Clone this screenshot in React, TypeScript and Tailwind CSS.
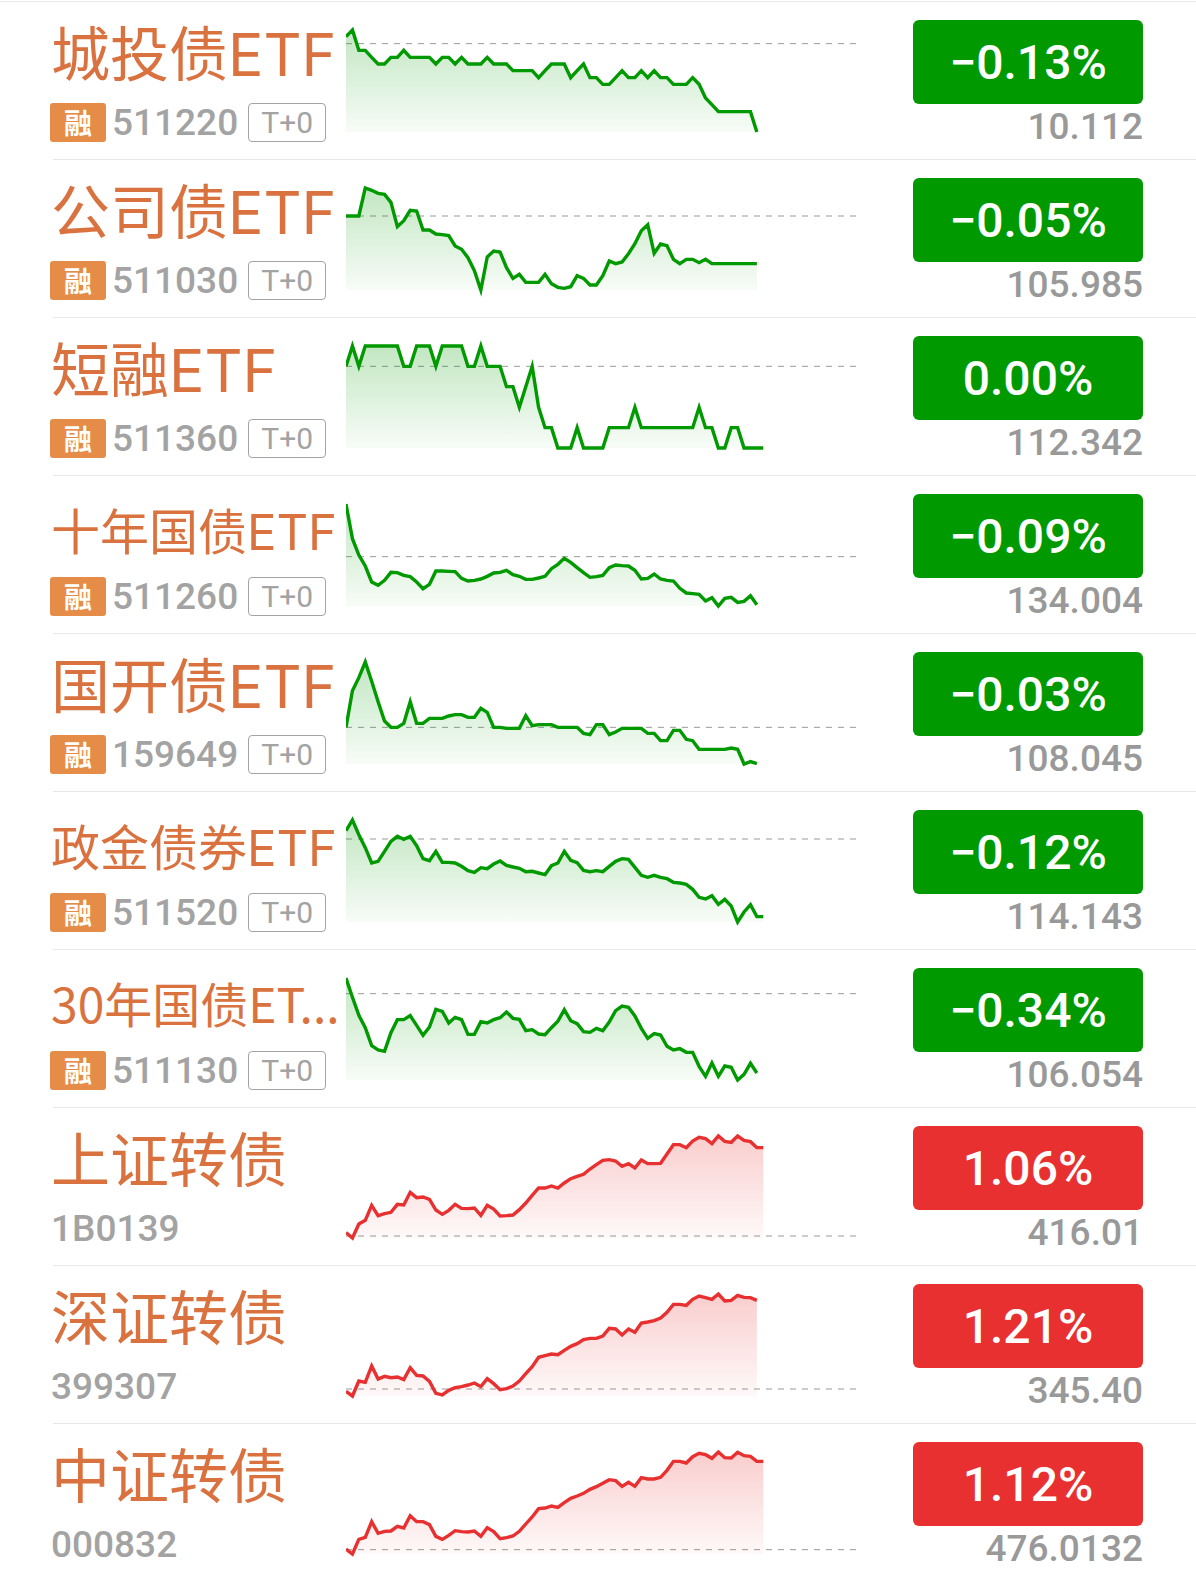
import React from 'react';
import clsx from 'clsx';

type Quote = {
  name: string;
  code: string;
  change: string;
  price: string;
  bond?: boolean;
  up?: boolean;
  base: number;
  points: number[];
};

// points run top-down, 0 is the high of the day and 306 the low
const quotes: Quote[] = [
  {
    name: '城投债ETF',
    code: '511220',
    change: '−0.13%',
    price: '10.112',
    bond: true,
    base: 41,
    points: [20, 0, 61, 61, 82, 102, 102, 82, 82, 61, 82, 82, 82, 82, 102, 82, 82, 102, 82, 102, 102, 102, 82, 102, 102, 102, 122, 122, 122, 122, 143, 122, 102, 102, 102, 143, 122, 102, 143, 143, 163, 163, 143, 122, 143, 143, 122, 143, 122, 143, 143, 163, 163, 163, 143, 163, 204, 224, 245, 245, 245, 245, 245, 245, 306],
  },
  {
    name: '公司债ETF',
    code: '511030',
    change: '−0.05%',
    price: '105.985',
    bond: true,
    base: 84,
    points: [84, 84, 84, 0, 7, 16, 19, 43, 116, 98, 67, 69, 126, 126, 138, 140, 143, 174, 184, 209, 248, 306, 207, 189, 192, 239, 271, 259, 283, 283, 283, 259, 287, 298, 301, 296, 263, 271, 291, 291, 263, 219, 227, 222, 197, 167, 128, 110, 196, 168, 173, 214, 227, 214, 214, 224, 214, 227, 227, 227, 227, 227, 227, 227, 227],
  },
  {
    name: '短融ETF',
    code: '511360',
    change: '0.00%',
    price: '112.342',
    bond: true,
    base: 61,
    points: [61, 0, 61, 0, 0, 0, 0, 0, 0, 61, 61, 0, 0, 0, 61, 0, 0, 0, 0, 61, 61, 0, 61, 61, 61, 122, 122, 184, 122, 61, 184, 245, 245, 306, 306, 306, 245, 306, 306, 306, 306, 245, 245, 245, 245, 184, 245, 245, 245, 245, 245, 245, 245, 245, 245, 184, 245, 245, 306, 306, 245, 245, 306, 306, 306, 306],
  },
  {
    name: '十年国债ETF',
    code: '511260',
    change: '−0.09%',
    price: '134.004',
    bond: true,
    base: 158,
    points: [0, 104, 153, 186, 234, 244, 229, 205, 206, 214, 218, 234, 254, 241, 201, 201, 202, 203, 223, 231, 229, 225, 217, 207, 205, 199, 212, 217, 226, 226, 222, 217, 194, 181, 163, 175, 191, 206, 220, 218, 214, 191, 183, 185, 186, 199, 225, 223, 210, 225, 229, 231, 253, 267, 269, 271, 291, 281, 306, 283, 280, 295, 292, 275, 302],
  },
  {
    name: '国开债ETF',
    code: '159649',
    change: '−0.03%',
    price: '108.045',
    bond: true,
    base: 196,
    points: [196, 86, 47, 0, 58, 119, 177, 196, 196, 184, 119, 184, 184, 169, 169, 169, 162, 158, 158, 166, 166, 139, 151, 196, 196, 199, 199, 199, 161, 191, 188, 188, 188, 196, 196, 196, 196, 214, 218, 188, 188, 218, 210, 199, 199, 199, 199, 214, 214, 236, 236, 205, 205, 232, 236, 262, 262, 262, 262, 262, 258, 262, 306, 299, 305],
  },
  {
    name: '政金债券ETF',
    code: '511520',
    change: '−0.12%',
    price: '114.143',
    bond: true,
    base: 57,
    points: [32, 0, 44, 83, 129, 124, 94, 64, 49, 58, 49, 77, 116, 122, 94, 127, 127, 129, 139, 152, 157, 143, 146, 132, 123, 136, 141, 145, 155, 154, 159, 164, 137, 129, 94, 121, 128, 151, 155, 152, 155, 139, 124, 116, 118, 142, 166, 172, 166, 172, 176, 187, 189, 193, 208, 232, 237, 227, 253, 238, 258, 306, 276, 254, 290, 290],
  },
  {
    name: '30年国债ET...',
    code: '511130',
    change: '−0.34%',
    price: '106.054',
    bond: true,
    base: 47,
    points: [0, 58, 112, 149, 203, 216, 220, 164, 125, 125, 113, 142, 172, 147, 94, 100, 135, 118, 125, 169, 169, 131, 135, 125, 119, 102, 121, 124, 158, 155, 168, 170, 149, 130, 95, 128, 137, 161, 163, 151, 158, 132, 98, 84, 88, 114, 151, 181, 167, 171, 205, 216, 212, 223, 223, 265, 295, 255, 295, 264, 268, 306, 289, 256, 285],
  },
  {
    name: '上证转债',
    code: '1B0139',
    change: '1.06%',
    price: '416.01',
    up: true,
    base: 300,
    points: [290, 306, 264, 253, 208, 239, 233, 229, 205, 207, 169, 185, 183, 190, 222, 235, 223, 205, 217, 218, 216, 238, 208, 219, 240, 239, 237, 221, 201, 178, 156, 156, 150, 156, 141, 128, 121, 115, 99, 86, 73, 71, 75, 91, 83, 96, 72, 83, 83, 82, 54, 26, 26, 35, 15, 4, 8, 23, 0, 16, 19, 0, 13, 17, 35, 35],
  },
  {
    name: '深证转债',
    code: '399307',
    change: '1.21%',
    price: '345.40',
    up: true,
    base: 285,
    points: [292, 306, 261, 265, 216, 255, 247, 251, 249, 257, 221, 244, 246, 262, 298, 303, 289, 281, 278, 273, 267, 278, 254, 269, 287, 284, 276, 261, 239, 218, 190, 185, 180, 182, 169, 157, 149, 137, 133, 133, 126, 103, 105, 123, 105, 115, 87, 84, 80, 72, 55, 31, 31, 34, 16, 6, 11, 16, 0, 21, 19, 4, 10, 11, 19],
  },
  {
    name: '中证转债',
    code: '000832',
    change: '1.12%',
    price: '476.0132',
    up: true,
    base: 293,
    points: [291, 306, 262, 256, 209, 244, 238, 237, 223, 228, 191, 209, 209, 218, 253, 262, 250, 236, 239, 240, 237, 253, 227, 239, 260, 257, 252, 238, 216, 195, 170, 168, 162, 166, 152, 139, 132, 124, 112, 104, 94, 83, 86, 103, 91, 103, 77, 81, 81, 76, 55, 28, 28, 33, 14, 4, 8, 19, 0, 17, 18, 1, 11, 13, 28, 28],
  },
];

const STEP = 19.26;

const nameStyle = (name: string) => {
  if (name.endsWith('...')) return 'text-5xl font-["Noto_Sans_CJK_SC",sans-serif]';
  if (name.length > 6) return 'pt-2 text-[49px] font-[Inter,"Noto_Sans_CJK_SC",sans-serif]';
  return 'text-[59px] font-[Inter,"Noto_Sans_CJK_SC",sans-serif]';
};

const Sparkline: React.FC<{ quote: Quote }> = ({ quote }) => {
  const color = quote.up ? '#e93030' : '#009900';
  const id = `fill-${quote.code}`;
  const line = quote.points.map((y, i) => `${(i * STEP).toFixed(1)},${y}`).join(' ');
  const end = ((quote.points.length - 1) * STEP).toFixed(1);

  return (
    <svg viewBox="0 -27 1530 360" preserveAspectRatio="none" className="mt-[19px] h-[120px] min-w-0 flex-1" aria-hidden="true">
      <defs>
        <linearGradient id={id} gradientUnits="userSpaceOnUse" x1="0" y1="0" x2="0" y2="306">
          <stop offset="0" stopColor={color} stopOpacity="0.24" />
          <stop offset="1" stopColor={color} stopOpacity="0.03" />
        </linearGradient>
      </defs>
      <line x1="0" x2="1530" y1={quote.base} y2={quote.base} stroke="#999999" strokeWidth="1" strokeDasharray="6 6" vectorEffect="non-scaling-stroke" />
      <polygon points={`0,306 ${line} ${end},306`} fill={`url(#${id})`} />
      <polyline points={line} fill="none" stroke={color} strokeWidth="3.4" strokeMiterlimit="10" vectorEffect="non-scaling-stroke" />
    </svg>
  );
};

const QuoteRow: React.FC<{ quote: Quote }> = ({ quote }) => (
  <div className="flex h-[157px] items-start pl-[50px] pr-[53px]">
    <div className="w-[296px] shrink-0 whitespace-nowrap">
      <h2 className={clsx('mt-2 flex h-[88px] items-center pl-px leading-none text-[#da7240]', nameStyle(quote.name))}>
        {quote.name}
      </h2>
      <div className="mt-1 flex h-10 items-center text-[#a3a3a3]">
        {quote.bond && (
          <span className="mr-[6px] flex h-[39px] w-14 items-center justify-center rounded-[3px] bg-[#e58d48] font-['Noto_Sans_CJK_SC',sans-serif] text-[28px] font-bold leading-none text-white">
            融
          </span>
        )}
        <span className={clsx('pt-[2px] text-[37px] font-medium leading-10', !quote.bond && 'pl-px')}>{quote.code}</span>
        {quote.bond && (
          <span className="ml-[10px] flex h-[39px] w-[78px] items-center justify-center rounded-[4px] border border-[#a3a3a3] pt-[2px] text-[30px] leading-none">
            T+0
          </span>
        )}
      </div>
    </div>

    <Sparkline quote={quote} />

    <div className="ml-[57px] mt-[18px] flex w-[230px] shrink-0 flex-col">
      <div
        className={clsx(
          'flex h-[84px] items-center justify-center rounded-[6px] pt-[2px] text-5xl font-medium text-white',
          quote.up ? 'bg-[#e93030]' : 'bg-[#009900]'
        )}
      >
        {quote.change}
      </div>
      <p className="mt-[3px] text-right text-[37px] font-medium leading-10 text-[#999999]">{quote.price}</p>
    </div>
  </div>
);

const App: React.FC = () => {
  return (
    <main className="min-h-screen bg-white pt-px font-[Roboto,sans-serif]">
      <ul>
        {quotes.map((quote, i) => (
          <li key={quote.code}>
            <div className={clsx('h-px bg-[#e8e8e8]', i > 0 && 'ml-[53px]')} />
            <QuoteRow quote={quote} />
          </li>
        ))}
      </ul>
    </main>
  );
};

export default App;
